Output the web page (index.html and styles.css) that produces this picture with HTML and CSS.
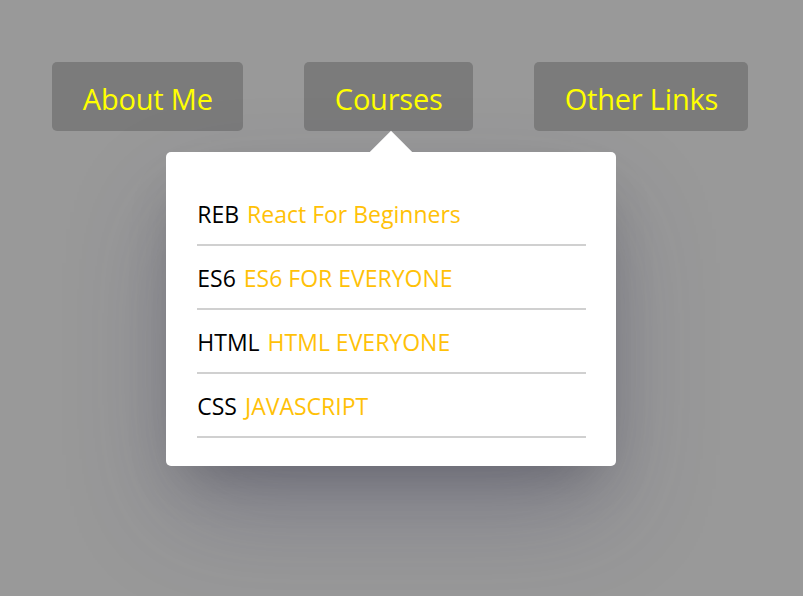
FILE: index.html
```html
<!DOCTYPE html>
<html lang="en">
<head>
<meta charset="utf-8">
<title>Menu</title>
<link rel="stylesheet" href="styles.css">
</head>
<body>
<nav class="nav">
  <div class="nav-item"><a class="nav-link">About Me</a></div>
  <div class="nav-item">
    <a class="nav-link">Courses</a>
    <div class="dropdown">
      <ul class="course-list">
        <li class="course"><span class="code">REB</span> <span class="title">React For Beginners</span></li>
        <li class="course"><span class="code">ES6</span> <span class="title">ES6 FOR EVERYONE</span></li>
        <li class="course"><span class="code">HTML</span> <span class="title">HTML EVERYONE</span></li>
        <li class="course"><span class="code">CSS</span> <span class="title">JAVASCRIPT</span></li>
      </ul>
    </div>
  </div>
  <div class="nav-item"><a class="nav-link">Other Links</a></div>
</nav>
</body>
</html>
```

FILE: styles.css
```css
html, body {
  margin: 0;
  height: 100%;
}
body {
  background: #999999;
  font-family: "Open Sans", "Noto Sans CJK KR", sans-serif;
}
.nav {
  display: flex;
  justify-content: center;
  gap: 61px;
  padding-top: 62px;
  padding-right: 3px;
}
.nav-item {
  position: relative;
}
.nav-link {
  display: block;
  height: 69px;
  box-sizing: border-box;
  line-height: 69px;
  padding: 2px 30px 0 31px;
  background: #7b7b7b;
  border-radius: 5px;
  color: #ffff00;
  font-size: 29px;
  letter-spacing: -0.2px;
  text-decoration: none;
}
.dropdown {
  position: absolute;
  top: calc(100% + 21px);
  left: 50%;
  width: 450px;
  margin-left: -222px;
  box-sizing: border-box;
  padding: 30px 30px 28px 31px;
  background: #fff;
  border-radius: 5px;
  box-shadow: 0 50px 110px -10px rgba(50, 50, 93, 0.28), 0 25px 50px -20px rgba(0, 0, 0, 0.25);
}
.dropdown::before {
  content: "";
  position: absolute;
  top: -15px;
  left: 50%;
  width: 30px;
  height: 30px;
  margin-left: -15px;
  background: #fff;
  transform: rotate(45deg);
}
.course-list {
  position: relative;
  list-style: none;
  margin: 0;
  padding: 0;
}
.course {
  padding: 18px 0 16px;
  line-height: 28px;
  font-size: 23px;
  border-bottom: 2px solid #d0d0d0;
  white-space: nowrap;
}
.code {
  color: #000;
  margin-right: 2px;
}
.title {
  color: #ffc107;
}
```
